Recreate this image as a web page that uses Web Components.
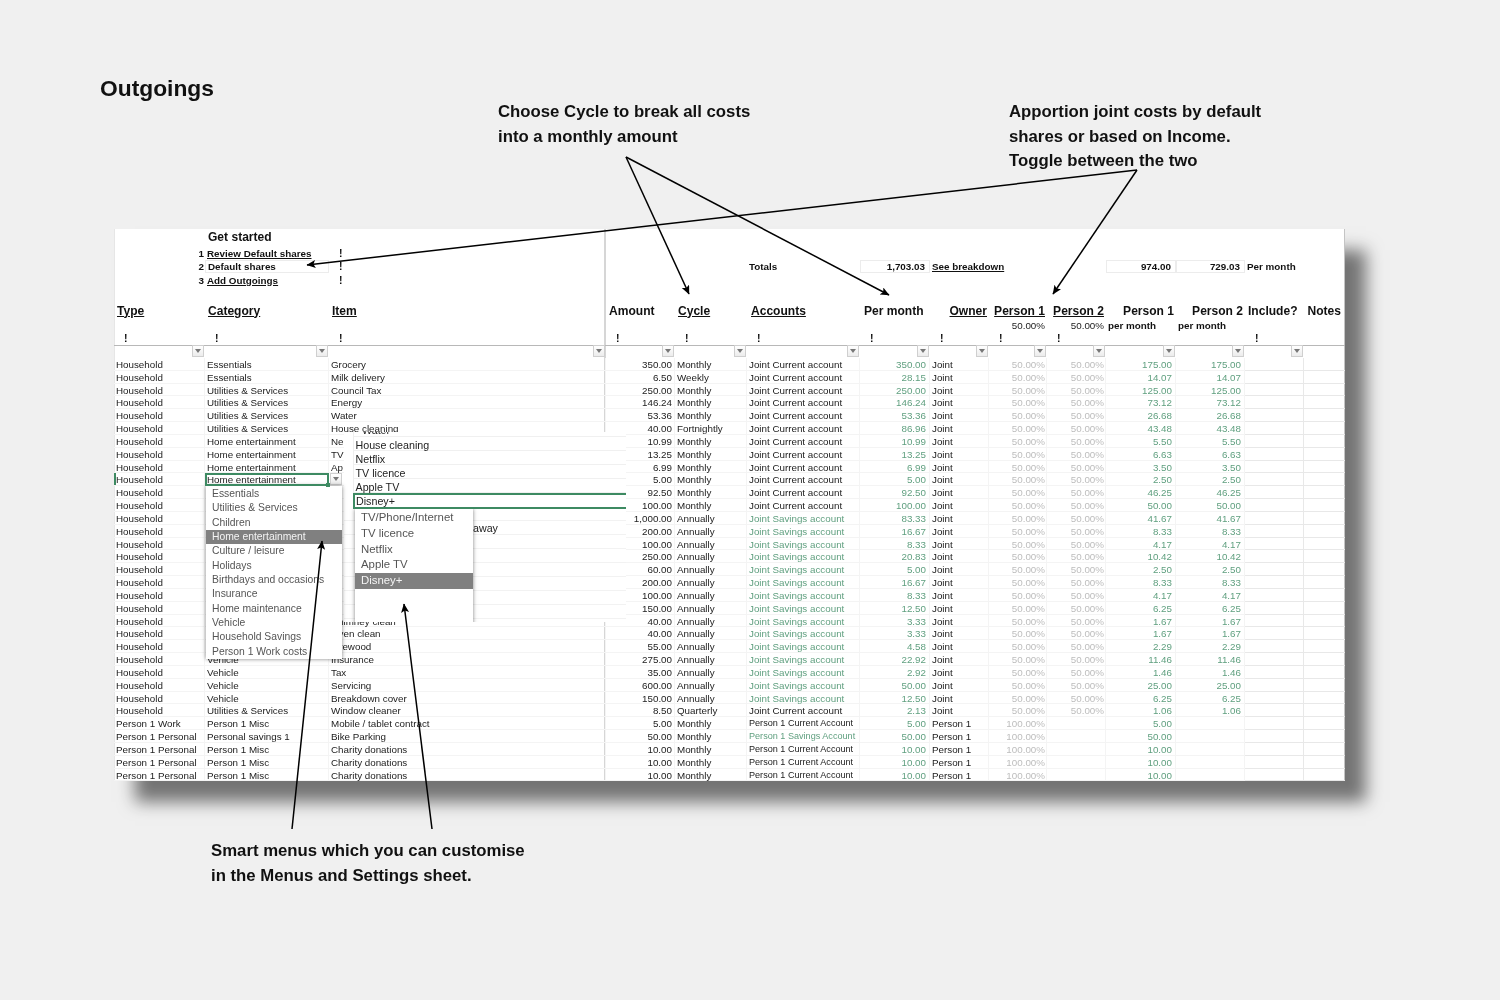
<!DOCTYPE html>
<html lang="en">
<head>
<meta charset="UTF-8">
<title>Outgoings</title>
<style>
  html, body { margin: 0; background: #f0f0f0; }
  body { font-family: "Liberation Sans", Arial, sans-serif; overflow: hidden; }
</style>
</head>
<body>
<budget-page></budget-page>

<script>
  class CallOut extends HTMLElement {
    constructor() {
      super();
      this.attachShadow({ mode: 'open' }).innerHTML = `
        <style>
          :host { display: block; font: bold 16.75px/24.5px "Liberation Sans", Arial, sans-serif; color: #111; white-space: nowrap; }
        </style>
        <slot></slot>`;
    }
  }

  class FilterButton extends HTMLElement {
    constructor() {
      super();
      this.attachShadow({ mode: 'open' }).innerHTML = `
        <style>
          :host { display: flex; box-sizing: border-box; width: 12px; height: 12px; align-items: center; justify-content: center;
                  border: 1px solid #cfcfcf; background: linear-gradient(#fff, #ececec); }
          i { width: 0; height: 0; border: 3px solid transparent; border-top: 4px solid #777; border-bottom: 0; }
        </style>
        <i></i>`;
    }
  }

  class MenuItem extends HTMLElement {
    constructor() {
      super();
      this.attachShadow({ mode: 'open' }).innerHTML = `
        <style>
          :host { display: block; padding-left: 6px; color: #555; white-space: nowrap; height: var(--item-height); line-height: var(--item-height); }
          :host([selected]) { background: #808080; color: #f4f4f4; }
        </style>
        <slot></slot>`;
    }
  }

  class DropMenu extends HTMLElement {
    constructor() {
      super();
      this.attachShadow({ mode: 'open' }).innerHTML = `
        <style>
          :host { display: block; position: absolute; box-sizing: border-box; background: #fff; box-shadow: 0 0 4px rgba(0,0,0,.5); }
        </style>
        <slot></slot>`;
    }
  }

  const COLS = [91, 124, 277, 69, 72, 113, 70, 59, 58, 59, 70, 69, 59, 41];
  const HEAD_ROWS = [17, 14, 13, 14, 16, 16, 13, 13, 13];

  const JC = 'Joint Current account', JS = 'Joint Savings account', PC = 'Person 1 Current Account', PS = 'Person 1 Savings Account';
  const HH = 'Household', US = 'Utilities & Services', HE = 'Home entertainment';
  // type, category, item, amount, cycle, account, per month, owner, p1, p2
  // category and item stay empty where the open menus cover the cell
  const DATA = [
    [HH, 'Essentials', 'Grocery', '350.00', 'Monthly', JC, '350.00', 'Joint', '175.00', '175.00'],
    [HH, 'Essentials', 'Milk delivery', '6.50', 'Weekly', JC, '28.15', 'Joint', '14.07', '14.07'],
    [HH, US, 'Council Tax', '250.00', 'Monthly', JC, '250.00', 'Joint', '125.00', '125.00'],
    [HH, US, 'Energy', '146.24', 'Monthly', JC, '146.24', 'Joint', '73.12', '73.12'],
    [HH, US, 'Water', '53.36', 'Monthly', JC, '53.36', 'Joint', '26.68', '26.68'],
    [HH, US, 'House cleaning', '40.00', 'Fortnightly', JC, '86.96', 'Joint', '43.48', '43.48'],
    [HH, HE, 'Ne', '10.99', 'Monthly', JC, '10.99', 'Joint', '5.50', '5.50'],
    [HH, HE, 'TV', '13.25', 'Monthly', JC, '13.25', 'Joint', '6.63', '6.63'],
    [HH, HE, 'Ap', '6.99', 'Monthly', JC, '6.99', 'Joint', '3.50', '3.50'],
    [HH, HE, '<filter-button></filter-button>', '5.00', 'Monthly', JC, '5.00', 'Joint', '2.50', '2.50'],
    [HH, '', '', '92.50', 'Monthly', JC, '92.50', 'Joint', '46.25', '46.25'],
    [HH, '', '', '100.00', 'Monthly', JC, '100.00', 'Joint', '50.00', '50.00'],
    [HH, '', '', '1,000.00', 'Annually', JS, '83.33', 'Joint', '41.67', '41.67'],
    [HH, '', '', '200.00', 'Annually', JS, '16.67', 'Joint', '8.33', '8.33'],
    [HH, '', '', '100.00', 'Annually', JS, '8.33', 'Joint', '4.17', '4.17'],
    [HH, '', '', '250.00', 'Annually', JS, '20.83', 'Joint', '10.42', '10.42'],
    [HH, '', '', '60.00', 'Annually', JS, '5.00', 'Joint', '2.50', '2.50'],
    [HH, '', '', '200.00', 'Annually', JS, '16.67', 'Joint', '8.33', '8.33'],
    [HH, '', '', '100.00', 'Annually', JS, '8.33', 'Joint', '4.17', '4.17'],
    [HH, '', '', '150.00', 'Annually', JS, '12.50', 'Joint', '6.25', '6.25'],
    [HH, '', 'Chimney clean', '40.00', 'Annually', JS, '3.33', 'Joint', '1.67', '1.67'],
    [HH, '', 'Oven clean', '40.00', 'Annually', JS, '3.33', 'Joint', '1.67', '1.67'],
    [HH, '', 'Firewood', '55.00', 'Annually', JS, '4.58', 'Joint', '2.29', '2.29'],
    [HH, 'Vehicle', 'Insurance', '275.00', 'Annually', JS, '22.92', 'Joint', '11.46', '11.46'],
    [HH, 'Vehicle', 'Tax', '35.00', 'Annually', JS, '2.92', 'Joint', '1.46', '1.46'],
    [HH, 'Vehicle', 'Servicing', '600.00', 'Annually', JS, '50.00', 'Joint', '25.00', '25.00'],
    [HH, 'Vehicle', 'Breakdown cover', '150.00', 'Annually', JS, '12.50', 'Joint', '6.25', '6.25'],
    [HH, US, 'Window cleaner', '8.50', 'Quarterly', JC, '2.13', 'Joint', '1.06', '1.06'],
    ['Person 1 Work', 'Person 1 Misc', 'Mobile / tablet contract', '5.00', 'Monthly', PC, '5.00', 'Person 1', '5.00', ''],
    ['Person 1 Personal', 'Personal savings 1', 'Bike Parking', '50.00', 'Monthly', PS, '50.00', 'Person 1', '50.00', ''],
    ['Person 1 Personal', 'Person 1 Misc', 'Charity donations', '10.00', 'Monthly', PC, '10.00', 'Person 1', '10.00', ''],
    ['Person 1 Personal', 'Person 1 Misc', 'Charity donations', '10.00', 'Monthly', PC, '10.00', 'Person 1', '10.00', ''],
    ['Person 1 Personal', 'Person 1 Misc', 'Charity donations', '10.00', 'Monthly', PC, '10.00', 'Person 1', '10.00', ''],
  ];

  class BudgetSheet extends HTMLElement {
    constructor() {
      super();
      const cell = (col, row, text, cls = '') =>
        `<div class="${cls}" style="grid-column:${col};grid-row:${row}">${text}</div>`;

      let head = cell(2, 1, 'Get started', 'b big');
      [[2, '1', 'Review Default shares', 'u'], [3, '2', 'Default shares', 'box'], [4, '3', 'Add Outgoings', 'u']].forEach(([r, n, t, c]) => {
        head += cell(1, r, n, 'b r tight') + cell(2, r, `<span>${t}</span>`, `b ${c}`) + cell(3, r, '!', 'b bang');
      });
      head += cell(6, 3, 'Totals', 'b') + cell(7, 3, '1,703.03', 'b r box') + cell(8, 3, '<span>See breakdown</span>', 'b u')
        + cell(11, 3, '974.00', 'b r box') + cell(12, 3, '729.03', 'b r box') + cell(13, 3, 'Per month', 'b');

      const titles = [
        [1, 'Type', 'u'], [2, 'Category', 'u'], [3, 'Item', 'u'], [4, 'Amount', ''], [5, 'Cycle', 'u'], [6, 'Accounts', 'u in'],
        [7, 'Per month', 'in'], [8, 'Owner', 'u r'], [9, 'Person 1', 'u r'], [10, 'Person 2', 'u r'],
        [11, 'Person 1', 'r'], [12, 'Person 2', 'r'], [13, 'Include?', ''], [14, 'Notes', 'r in'],
      ];
      titles.forEach(([c, t, k]) => { head += cell(c, 6, `<span>${t}</span>`, `b big title ${k}`); });
      head += cell(9, 7, '50.00%', 'r') + cell(10, 7, '50.00%', 'r') + cell(11, 7, 'per month', 'b') + cell(12, 7, 'per month', 'b');
      [1, 2, 3, 4, 5, 6, 7, 8, 9, 10, 13].forEach(c => { head += cell(c, 8, '!', 'b bang'); });
      COLS.slice(0, 13).forEach((w, i) => { head += cell(i + 1, 9, '<filter-button></filter-button>', 'filter'); });

      let rows = '';
      DATA.forEach((d, i) => {
        const r = i + 10;
        const acct = d[5] === JS || d[5] === PS ? 'green' : '';
        const small = d[5] === PC || d[5] === PS ? 'small' : '';
        const two = d[9] !== '';
        rows += cell(1, r, d[0], 'd' + (i === 9 ? ' mark' : ''))
          + cell(2, r, d[1], 'd' + (i === 9 ? ' active' : ''))
          + cell(3, r, d[2], 'd' + (i === 9 ? ' open' : ''))
          + cell(4, r, d[3], 'd n')
          + cell(5, r, d[4], 'd')
          + cell(6, r, d[5], `d ${acct} ${small}`)
          + cell(7, r, d[6], 'd n green wide')
          + cell(8, r, d[7], 'd')
          + cell(9, r, two ? '50.00%' : '100.00%', 'd n grey')
          + cell(10, r, two ? '50.00%' : '', 'd n grey')
          + cell(11, r, d[8], 'd n green wide')
          + cell(12, r, d[9], 'd n green wide')
          + cell(13, r, '', 'd strong')
          + cell(14, r, '', 'd strong end');
      });

      this.attachShadow({ mode: 'open' }).innerHTML = `
        <style>
          :host { display: grid; position: relative; box-sizing: border-box; margin-left: 114px; width: 1231px; height: 552.4px;
                  grid-template-columns: ${COLS.map(w => w + 'px').join(' ')};
                  grid-template-rows: ${HEAD_ROWS.map(h => h + 'px').join(' ')} repeat(33, 12.83px);
                  background: #fff; color: #222; font: 9.8px/13px "Liberation Sans", Arial, sans-serif;
                  box-shadow: 21px 21px 16px #747474, inset -1px -1px 0 #c4c4c4, inset 1px 0 0 #e6e6e6; }
          div { box-sizing: border-box; padding: 0 2px; white-space: nowrap; min-width: 0; }
          .b { font-weight: bold; font-size: 9.85px; color: #111; display: flex; align-items: center; }
          .big { font-size: 12.05px; padding-left: 3px; }
          .u span { text-decoration: underline; }
          .r { justify-content: flex-end; text-align: right; }
          .tight { padding-right: 1px; }
          .box { border: 1px solid #ececec; padding-right: 4px; }
          .bang { padding-left: 10px; font-size: 10.5px; }
          .in { padding-left: 4px; padding-right: 4px; }
          .filter { display: flex; justify-content: flex-end; padding: 0 1px 1px 0; align-items: center; }
          .d { line-height: 14px; border-right: 1px solid #f4f4f4; border-bottom: 1px solid #f4f4f4; }
          .n { text-align: right; }
          .wide { padding-right: 3px; }
          .green { color: #5f9f7f; }
          .grey { color: #bdbdbd; padding-right: 1px; }
          .small { font-size: 9.1px; line-height: 13px; }
          .strong { border-color: #e8e8e8; }
          .end { border-right: 0; }
          .mark { box-shadow: inset 2px 0 0 #3d8a62; }
          .active { border: 2px solid #3d8a62; position: relative; z-index: 3; padding-left: 0; line-height: 10.5px; }
          .active::after { content: ""; position: absolute; right: -3px; bottom: -3px; width: 4px; height: 4px; background: #3d8a62; }
          .open { padding-left: 1px; }
          .vline { grid-column: 3; grid-row: 1 / -1; border-right: 2px solid #d6d6d6; padding: 0; }
          .hline { grid-column: 1 / -1; grid-row: 9; border-top: 1px solid #b8b8b8; padding: 0; }

          .patch { position: absolute; left: 230px; top: 203px; width: 282px; height: 190px; background: #fff; overflow: hidden; padding: 0; font-size: 10.7px; color: #222; }
          .patch div { padding: 0; }
          .water { height: 5px; overflow: hidden; margin-left: 9px; border-left: 1px solid #eee; border-bottom: 1px solid #f0f0f0; }
          .water span { display: block; margin: -9px 0 0 8px; line-height: 14px; }
          .line { height: 14px; line-height: 16px; margin-left: 9px; padding-left: 1.5px !important; border-left: 1px solid #eee; border-bottom: 1px solid #f0f0f0; }
          .edit { position: relative; z-index: 2; height: 16px; line-height: 13px; margin-left: 9px; padding-left: 1px !important; background: #fff; border: 2px solid #3d8a62; border-right: 0; }
          .blank { height: 14px; border-bottom: 1px solid #f2f2f2; }
          .blank:first-child { height: 12px; }
          .away { line-height: 15px; padding-left: 129px !important; }
          .m1 { left: 92px; top: 257px; width: 136px; height: 173px; padding-top: 1px; font-size: 10.35px; --item-height: 14.33px; z-index: 2; }
          .m2 { left: 11px; top: 77px; width: 118px; height: 118px; padding-top: 1px; font-size: 11.4px; --item-height: 15.75px; }
        </style>
        <div class="vline"></div><div class="hline"></div>
        ${head}${rows}
        <drop-menu class="m1">
          <menu-item>Essentials</menu-item><menu-item>Utilities &amp; Services</menu-item><menu-item>Children</menu-item>
          <menu-item selected>Home entertainment</menu-item><menu-item>Culture / leisure</menu-item><menu-item>Holidays</menu-item>
          <menu-item>Birthdays and occasions</menu-item><menu-item>Insurance</menu-item><menu-item>Home maintenance</menu-item>
          <menu-item>Vehicle</menu-item><menu-item>Household Savings</menu-item><menu-item>Person 1 Work costs</menu-item>
        </drop-menu>
        <div class="patch">
          <div class="water"><span>Water</span></div>
          <div class="line">House cleaning</div><div class="line">Netflix</div><div class="line">TV licence</div><div class="line">Apple TV</div>
          <div class="edit">Disney+</div>
          <section>
            <div class="blank"></div><div class="blank away">away</div><div class="blank"></div><div class="blank"></div>
            <div class="blank"></div><div class="blank"></div><div class="blank"></div><div class="blank"></div><div class="blank"></div>
          </section>
          <drop-menu class="m2">
            <menu-item>TV/Phone/Internet</menu-item><menu-item>TV licence</menu-item><menu-item>Netflix</menu-item>
            <menu-item>Apple TV</menu-item><menu-item selected>Disney+</menu-item>
          </drop-menu>
        </div>`;
    }
  }

  class ArrowLayer extends HTMLElement {
    constructor() {
      super();
      const lines = [
        [626, 157, 689, 294], [626, 157, 889, 295], [1137, 170, 307, 265],
        [1137, 170, 1053, 294], [292, 829, 322, 541], [432, 829, 404, 604],
      ];
      this.attachShadow({ mode: 'open' }).innerHTML = `
        <style>
          :host { display: block; position: absolute; left: 0; top: 0; z-index: 5; width: 1500px; height: 1000px; pointer-events: none; }
          svg { display: block; }
        </style>
        <svg width="1500" height="1000" viewBox="0 0 1500 1000">
          <defs>
            <marker id="head" markerUnits="userSpaceOnUse" markerWidth="10" markerHeight="9" refX="8.5" refY="4" orient="auto">
              <path d="M0 0 L9 4 L0 8 L2 4 Z" fill="#000"/>
            </marker>
          </defs>
          ${lines.map(([a, b, c, d]) => `<line x1="${a}" y1="${b}" x2="${c}" y2="${d}" stroke="#000" stroke-width="1.5" marker-end="url(#head)"/>`).join('')}
        </svg>`;
    }
  }

  class BudgetPage extends HTMLElement {
    constructor() {
      super();
      this.attachShadow({ mode: 'open' }).innerHTML = `
        <style>
          :host { display: block; position: relative; width: 1500px; height: 1000px; background: #f0f0f0; overflow: hidden;
                  font-family: "Liberation Sans", Arial, sans-serif; filter: blur(.35px); }
          header { display: grid; grid-template-columns: 398px 511px 1fr; height: 229px; box-sizing: border-box; padding-left: 100px; }
          h1 { margin: 0; padding-top: 75px; font: bold 22.8px/26px "Liberation Sans", Arial, sans-serif; color: #111; }
          call-out { padding-top: 100px; }
          .caption { margin: 58px 0 0 211px; padding: 0; }
        </style>
        <header>
          <h1>Outgoings</h1>
          <call-out>Choose Cycle to break all costs<br>into a monthly amount</call-out>
          <call-out>Apportion joint costs by default<br>shares or based on Income.<br>Toggle between the two</call-out>
        </header>
        <budget-sheet></budget-sheet>
        <call-out class="caption">Smart menus which you can customise<br>in the Menus and Settings sheet.</call-out>
        <arrow-layer></arrow-layer>`;
    }
  }

  customElements.define('call-out', CallOut);
  customElements.define('filter-button', FilterButton);
  customElements.define('menu-item', MenuItem);
  customElements.define('drop-menu', DropMenu);
  customElements.define('budget-sheet', BudgetSheet);
  customElements.define('arrow-layer', ArrowLayer);
  customElements.define('budget-page', BudgetPage);
</script>
</body>
</html>
